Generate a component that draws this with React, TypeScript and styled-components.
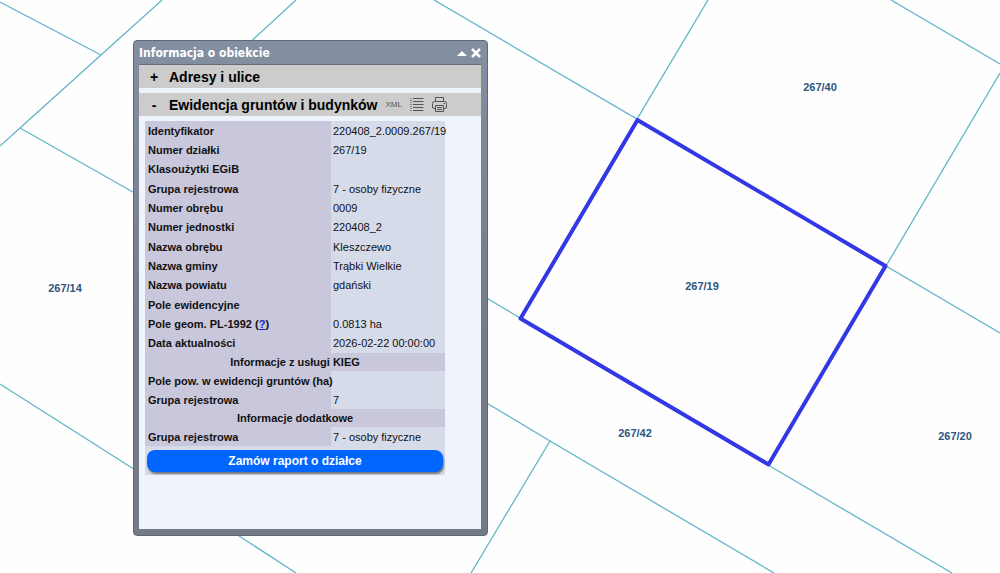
import React from 'react'
import styled, { createGlobalStyle } from 'styled-components'

type Entry = {
  label: string
  value?: string
  help?: boolean
}

const mainEntries: Entry[] = [
  { label: 'Identyfikator', value: '220408_2.0009.267/19' },
  { label: 'Numer działki', value: '267/19' },
  { label: 'Klasoużytki EGiB' },
  { label: 'Grupa rejestrowa', value: '7 - osoby fizyczne' },
  { label: 'Numer obrębu', value: '0009' },
  { label: 'Numer jednostki', value: '220408_2' },
  { label: 'Nazwa obrębu', value: 'Kleszczewo' },
  { label: 'Nazwa gminy', value: 'Trąbki Wielkie' },
  { label: 'Nazwa powiatu', value: 'gdański' },
  { label: 'Pole ewidencyjne' },
  { label: 'Pole geom. PL-1992', value: '0.0813 ha', help: true },
  { label: 'Data aktualności', value: '2026-02-22 00:00:00' },
]

const kiegEntries: Entry[] = [
  { label: 'Pole pow. w ewidencji gruntów (ha)' },
  { label: 'Grupa rejestrowa', value: '7' },
]

const extraEntries: Entry[] = [
  { label: 'Grupa rejestrowa', value: '7 - osoby fizyczne' },
]

const parcels = [
  { id: '267/40', x: 820, y: 91 },
  { id: '267/19', x: 702, y: 290 },
  { id: '267/14', x: 65, y: 292 },
  { id: '267/42', x: 635, y: 437 },
  { id: '267/20', x: 955, y: 440 },
]

const borders = [
  'M0 2 101 55',
  'M162 0 101 55 20 128 0 146',
  'M20 128 140 196',
  'M296 0 245 47',
  'M434 0 637 119 708 0',
  'M891 0 1000 64',
  'M1000 73 886 266 1000 333',
  'M480 294 520 318',
  'M768 465 952 573',
  'M480 399 550 441 774 573',
  'M550 441 471 573',
  'M0 384 140 473',
  'M230 530 296 573',
]

const EntryRows: React.FC<{ entries: Entry[] }> = ({ entries }) => (
  <>
    {entries.map((entry) => (
      <Row key={entry.label}>
        <LabelCell scope="row">
          {entry.label}
          {entry.help && (
            <>
              {' ('}
              <HelpLink href="#pole">?</HelpLink>)
            </>
          )}
        </LabelCell>
        <ValueCell>{entry.value}</ValueCell>
      </Row>
    ))}
  </>
)

const ListIcon: React.FC = () => (
  <svg width="14" height="15" viewBox="0 0 14 15" stroke="#555" fill="none">
    <path d="M3 1.5H13.5M3 4.5H13.5M3 7.5H13.5M3 10.5H13.5M3 13.5H13.5" />
    <path d="M1 1V14" strokeDasharray="1 1" />
  </svg>
)

const PrintIcon: React.FC = () => (
  <svg width="15" height="15" viewBox="0 0 15 15" stroke="#555" fill="none">
    <path d="M3.5 4.5V.5H11.5V4.5" />
    <path d="M3 11.5H2Q.5 11.5.5 10V6.5Q.5 4.5 2.5 4.5H12.5Q14.5 4.5 14.5 6.5V10Q14.5 11.5 13 11.5H12" />
    <path d="M3.5 8.5H11.5V14.5H3.5Z" />
    <path d="M5 10.5H10M5 12.5H10M11.5 6.5H13" />
  </svg>
)

const App: React.FC = () => {
  return (
    <Page>
      <GlobalStyle />
      <Map viewBox="0 0 1000 573" preserveAspectRatio="xMinYMin slice">
        <Borders d={borders.join('')} />
        <Selection d="M637.5 120 885.5 266 768.5 464.5 520.5 318.5Z" />
        {parcels.map((parcel) => (
          <ParcelLabel key={parcel.id} x={parcel.x} y={parcel.y}>
            {parcel.id}
          </ParcelLabel>
        ))}
      </Map>
      <Window>
        <TitleBar>
          <Title>Informacja o obiekcie</Title>
          <WindowButton aria-label="Zwiń">
            <svg width="10" height="10" viewBox="0 0 10 10">
              <path d="M0 8 5 3 10 8Z" fill="#fff" />
            </svg>
          </WindowButton>
          <WindowButton aria-label="Zamknij">
            <svg width="10" height="10" viewBox="0 0 10 10">
              <path d="M1 1 9 9M9 1 1 9" stroke="#fff" strokeWidth="2.5" />
            </svg>
          </WindowButton>
        </TitleBar>
        <Content>
          <Section>
            <Toggle aria-expanded={false}>
              <Sign>+</Sign>Adresy i ulice
            </Toggle>
          </Section>
          <Section>
            <Toggle aria-expanded>
              <Sign>-</Sign>Ewidencja gruntów i budynków
            </Toggle>
            <Tools>
              <ToolButton>XML</ToolButton>
              <ToolButton aria-label="Lista">
                <ListIcon />
              </ToolButton>
              <ToolButton aria-label="Drukuj">
                <PrintIcon />
              </ToolButton>
            </Tools>
          </Section>
          <Details>
            <Table>
              <MainBody>
                <EntryRows entries={mainEntries} />
              </MainBody>
              <tbody>
                <tr>
                  <GroupCell colSpan={2}>Informacje z usługi KIEG</GroupCell>
                </tr>
                <EntryRows entries={kiegEntries} />
              </tbody>
              <tbody>
                <tr>
                  <GroupCell colSpan={2}>Informacje dodatkowe</GroupCell>
                </tr>
                <EntryRows entries={extraEntries} />
              </tbody>
            </Table>
            <ReportButton>Zamów raport o działce</ReportButton>
          </Details>
        </Content>
      </Window>
    </Page>
  )
}

const GlobalStyle = createGlobalStyle`
  body {
    margin: 0;
    font-family: 'Liberation Sans', Arial, sans-serif;
    color: #111;
  }
  button {
    padding: 0;
    border: 0;
    background: none;
    font: inherit;
    color: inherit;
    cursor: pointer;
  }
  svg {
    display: block;
  }
`
const Page = styled.main`
  position: relative;
  min-height: 100vh;
  overflow: hidden;
  box-sizing: border-box;
  padding: 40px 16px 32px 133px;
  background: #fefefe;
`
const Map = styled.svg`
  position: absolute;
  inset: 0;
  width: 100%;
  height: 100%;
`
const Borders = styled.path`
  fill: none;
  stroke: #62b6c8;
  stroke-width: 1.3;
`
const Selection = styled.path`
  fill: none;
  stroke: #3338e6;
  stroke-width: 4;
  stroke-linejoin: round;
`
const ParcelLabel = styled.text`
  fill: #2d5580;
  font-size: 11px;
  font-weight: bold;
  text-anchor: middle;
`
const Window = styled.section`
  position: relative;
  box-sizing: border-box;
  max-width: 355px;
  padding: 0 6px 6px 5px;
  border: 1px solid #626873;
  border-radius: 4px;
  background: linear-gradient(#8390a2, #747a88 60%);
`
const TitleBar = styled.header`
  display: flex;
  align-items: center;
  gap: 4px;
  height: 23px;
`
const Title = styled.h1`
  flex: 1;
  margin: 0;
  font: bold 12px 'DejaVu Sans Condensed', Tahoma, sans-serif;
  color: #fff;
`
const WindowButton = styled.button`
  width: 10px;
`
const Content = styled.div`
  display: flex;
  flex-direction: column;
  gap: 5px;
  padding-bottom: 54px;
  border-top: 1px solid #666c78;
  background: #eff3fa;
`
const Section = styled.div`
  display: flex;
  align-items: center;
  height: 23px;
  background: #ccc;
`
const Toggle = styled.button`
  display: flex;
  font-size: 14px;
  font-weight: bold;
  color: #000;
`
const Sign = styled.span`
  width: 30px;
`
const Tools = styled.div`
  display: flex;
  align-items: center;
  gap: 8px;
  margin-left: 8px;
`
const ToolButton = styled.button`
  font-size: 8px;
  color: #555;
`
const Details = styled.div`
  width: 300px;
  margin-left: 6px;
  padding-bottom: 3px;
  background: #d6dbea;
`
const Table = styled.table`
  width: 100%;
  table-layout: fixed;
  border-collapse: collapse;
  font-size: 11px;
  line-height: 14px;
`
const Row = styled.tr`
  height: 19px;
`
const MainBody = styled.tbody`
  ${Row}:nth-child(3n) {
    height: 20px;
  }
`
const LabelCell = styled.th`
  width: 183px;
  padding: 0 0 0 3px;
  background: #c8c7dc;
  text-align: left;
  white-space: nowrap;
`
const ValueCell = styled.td`
  padding: 0 0 0 2px;
  white-space: nowrap;
`
const GroupCell = styled.th`
  height: 18px;
  padding: 0;
  background: #c8c7dc;
`
const HelpLink = styled.a`
  color: #1a1adf;
`
const ReportButton = styled.button`
  display: block;
  width: 296px;
  height: 22px;
  margin: 4px 2px 0;
  border-radius: 8px;
  background: #06f;
  box-shadow: 1px 2px 2px #777;
  font-size: 12px;
  font-weight: bold;
  color: #fff;
`

export default App
